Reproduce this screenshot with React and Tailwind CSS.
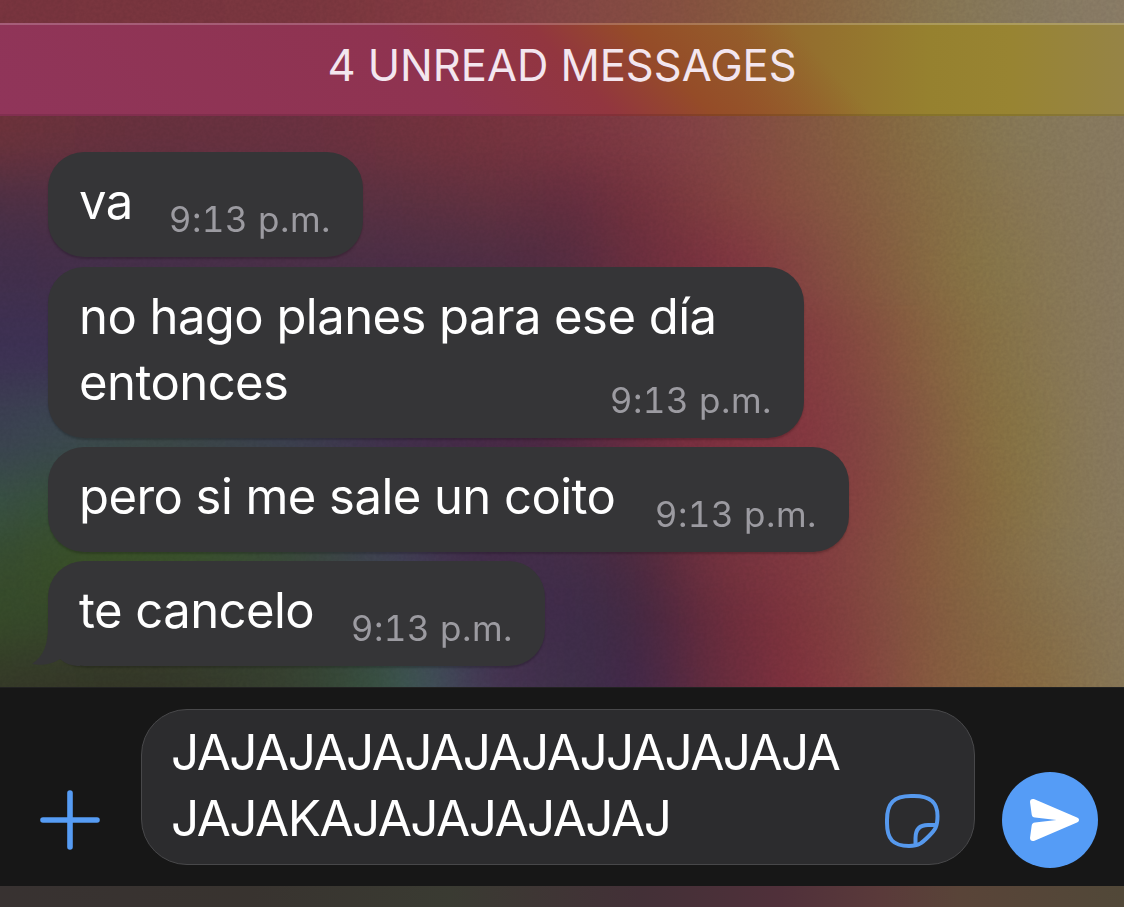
import React from 'react';

// horizontal colour bands of the wallpaper, blurred together
const bands = [
  'h-[135px] bg-[linear-gradient(90deg,#76333d_100px,#78353e_400px,#80393f_550px,#824444_662px,#84503f_790px,#855e3f_880px,#856a48_970px,#857552_1040px,#857860_1140px,#887a65_1224px)]',
  'h-[95px] bg-[linear-gradient(90deg,#6b313a_100px,#66303d_250px,#68303f_400px,#72313c_550px,#7a3540_690px,#824144_800px,#835040_880px,#84653f_980px,#857045_1040px,#857755_1110px,#867860_1224px)]',
  'h-[60px] bg-[linear-gradient(90deg,#4c2f43_100px,#523042_250px,#583040_470px,#62303e_600px,#602c3d_660px,#72303c_740px,#84453f_850px,#845a40_950px,#856f44_1050px,#867656_1140px,#867860_1224px)]',
  'h-[75px] bg-[linear-gradient(90deg,#412e4a_100px,#432e48_250px,#482e46_400px,#4c2d44_550px,#512c40_660px,#6c2d3c_750px,#80343f_840px,#824540_900px,#845c3f_980px,#857343_1070px,#867656_1160px,#867860_1224px)]',
  'h-[85px] bg-[linear-gradient(90deg,#3c3052_100px,#3c3050_350px,#432c48_600px,#6c2c3c_770px,#80353f_880px,#84483f_960px,#855f3f_1020px,#857042_1085px,#867654_1160px,#867860_1224px)]',
  'h-[80px] bg-[linear-gradient(90deg,#3a3f50_100px,#3a4750_150px,#3a4647_250px,#3a3d4e_400px,#402c4a_500px,#4a2742_650px,#7a2e3e_790px,#82343f_890px,#823f40_950px,#835340_1010px,#856a40_1070px,#857342_1120px,#867654_1170px,#867860_1224px)]',
  'h-[58px] bg-[linear-gradient(90deg,#375045_100px,#364e38_150px,#374c38_300px,#3c3e4c_450px,#422a48_570px,#602a3e_750px,#80323f_880px,#83403f_960px,#845a3f_1030px,#85703f_1110px,#867654_1170px,#86785e_1224px)]',
  'h-[60px] bg-[linear-gradient(90deg,#364a2f_100px,#385022_200px,#38502a_300px,#38483a_400px,#3f4058_500px,#402a48_560px,#402d48_670px,#4a283e_740px,#70303c_805px,#803840_900px,#82453f_960px,#84583e_1020px,#84683f_1080px,#857450_1150px,#86785c_1224px)]',
  'h-[62px] bg-[linear-gradient(90deg,#354a28_100px,#36452b_200px,#364530_400px,#3b4450_520px,#42294a_620px,#3c2d48_690px,#45263f_750px,#622a3c_800px,#7a303a_880px,#82433f_960px,#835c3e_1040px,#846c45_1130px,#86765a_1224px)]',
  'h-[120px] bg-[linear-gradient(90deg,#343827_100px,#333426_250px,#353f30_400px,#36503f_480px,#3f5858_520px,#3f4458_550px,#453050_600px,#3d3048_660px,#402648_740px,#5f2a3c_800px,#80303c_900px,#83433f_970px,#845a3e_1030px,#856a40_1140px,#857658_1224px)]',
];

const messages = [
  { id: 1, lines: ['va'], width: 'w-[315px] mb-px' },
  { id: 2, lines: ['no hago planes para ese día', 'entonces'], width: 'w-[756px]' },
  { id: 3, lines: ['pero si me sale un coito'], width: 'w-[801px]' },
  { id: 4, lines: ['te cancelo'], width: 'w-[497px]', tail: true },
];

function Wallpaper() {
  return (
    <div className="absolute inset-0 overflow-hidden">
      <div className="absolute -top-[60px] -left-[100px] w-[1324px] flex flex-col blur-[25px]">
        {bands.map((band, i) => (
          <div key={i} className={band} />
        ))}
      </div>
      <svg className="absolute inset-0 w-full h-full opacity-[0.03] mix-blend-overlay">
        <filter id="grain" colorInterpolationFilters="sRGB">
          <feTurbulence type="fractalNoise" baseFrequency="0.3" numOctaves="2" />
          <feColorMatrix values="1.5 0 0 0 -0.25  1.5 0 0 0 -0.25  1.5 0 0 0 -0.25  0 0 0 0 1" />
        </filter>
        <rect width="100%" height="100%" filter="url(#grain)" />
      </svg>
    </div>
  );
}

function Message({ lines, width, tail }) {
  return (
    <div className={`relative rounded-[36px] bg-[#353537] pt-[17px] pb-[22px] pl-[31px] pr-8 shadow-[0_2px_2px_rgba(0,0,0,0.2)] text-[49px] leading-[66px] tracking-[-0.55px] text-white ${width}`}>
      {tail && (
        <svg className="absolute -left-4 bottom-0 w-12 h-10" viewBox="0 0 48 40" fill="#353537">
          <path d="M16 0C16 18 12 30 0 38C9 40 21 38 28 33C34 38 40 40 48 40V0Z" />
        </svg>
      )}
      {lines.slice(0, -1).map(line => (
        <p key={line} className="whitespace-nowrap">{line}</p>
      ))}
      <div className="relative flex h-[66px] justify-between items-end">
        <p className="whitespace-nowrap">{lines[lines.length - 1]}</p>
        <span className="-mb-0.5 text-[35px] leading-9 tabular-nums tracking-[0.5px] text-[#9c9ba1] whitespace-nowrap">9:13 p.m.</span>
      </div>
    </div>
  );
}

function App() {
  return (
    <div className="relative w-[1124px] h-[907px] overflow-hidden flex flex-col bg-[#171717] font-['Inter',sans-serif]">
      <Wallpaper />

      <div className="relative mt-[23px] h-[93px] shrink-0 flex items-center justify-center border-t-2 border-t-white/20 border-b-2 border-b-black/10 bg-[linear-gradient(47deg,#90355a_0px,#8f3350_340px,#92363f_450px,#954c28_522px,rgba(148,112,46,0)_640px),linear-gradient(90deg,#94642c_740px,#94702e_820px,#96812f_930px,#988432_1010px,#968446_1124px)] bg-origin-border">
        <h1 className="-mt-[7px] text-[43.5px] leading-none tracking-[-0.02px] text-[#f3e6ef]">4 UNREAD MESSAGES</h1>
      </div>

      <main className="relative flex-1 flex flex-col gap-[9px] pt-9 pl-12">
        {messages.map(message => (
          <Message key={message.id} {...message} />
        ))}
      </main>

      <footer className="relative h-[199px] shrink-0 flex items-end bg-[#171717] pb-[21px] border-t border-[#222]">
        <button className="ml-10 mb-[15px] size-[60px]">
          <svg viewBox="0 0 60 60" stroke="#569cf4" strokeWidth="5.6" strokeLinecap="round">
            <path d="M30 3V57M3 30H57" />
          </svg>
        </button>
        <div className="ml-[41px] w-[834px] h-[156px] flex items-end justify-between rounded-[46px] border border-[#48484a] bg-[#2c2c2e] pl-[29px] pr-[34px]">
          <p className="self-start mt-[9px] text-[49.5px] leading-[66px] tracking-[-1.55px] text-white whitespace-nowrap">
            JAJAJAJAJAJAJAJJAJAJAJA<br />JAJAKAJAJAJAJAJAJ
          </p>
          <button className="mb-[15.5px] size-14">
            <svg viewBox="0 0 56 56" fill="none" stroke="#5699ee" strokeWidth="4" strokeLinejoin="round">
              <path d="M27 3H30C46 3 53.500 9 53.500 23C53.500 34 51 37 45 43C38 50 35 53 25 53C9 53 3 46 3 30V27C3 10 10 3 27 3Z" />
              <path d="M52 32H44C35 32 31.500 37 31.500 45V52" />
            </svg>
          </button>
        </div>
        <button className="ml-[27px] -mb-[3px] size-24 rounded-full bg-[#559cf6]">
          <svg viewBox="0 0 96 96" fill="white">
            <path d="M28 30C28 27.500 30 26.300 32.500 27.300L75 45.500C77.700 46.700 77.700 49.300 75 50.500L32.500 68.700C30 69.700 28 68.500 28 66L29.700 53.500C30 51.500 31 50.700 33 50.400L54.500 48L33 45.600C31 45.300 30 44.500 29.700 42.500Z" />
          </svg>
        </button>
      </footer>

      <div className="relative h-[21px] shrink-0 bg-[linear-gradient(90deg,#383231_0px,#38332f_250px,#3a3b32_450px,#433037_640px,#50303a_780px,#5a3a3a_880px,#594438_960px,#514838_1124px)]" />
    </div>
  );
}

export default App;
